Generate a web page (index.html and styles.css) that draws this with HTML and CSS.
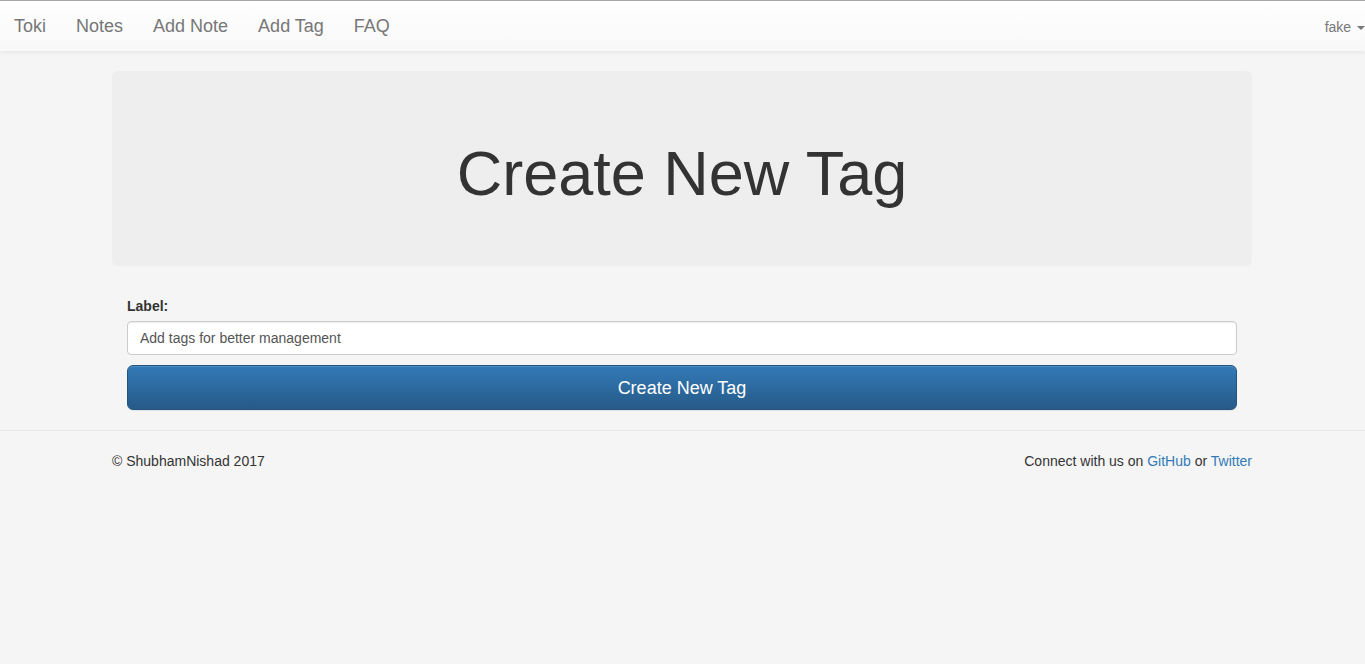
FILE: index.html
```html
<!DOCTYPE html>
<html lang="en">
<head>
<meta charset="utf-8">
<title>Toki - Add Tag</title>
<link rel="stylesheet" href="styles.css">
</head>
<body>
<nav class="navbar">
  <ul class="nav-left">
    <li><a class="brand" href="#">Toki</a></li>
    <li><a href="#">Notes</a></li>
    <li><a href="#">Add Note</a></li>
    <li><a href="#">Add Tag</a></li>
    <li><a href="#">FAQ</a></li>
  </ul>
  <div class="nav-right">
    <a href="#" class="user">fake <span class="caret"></span></a>
  </div>
</nav>
<main class="container">
  <div class="jumbotron">
    <h1>Create New Tag</h1>
  </div>
  <form class="tag-form">
    <label for="label">Label:</label>
    <input id="label" type="text" value="Add tags for better management">
    <button type="button" class="btn-primary">Create New Tag</button>
  </form>
</main>
<footer class="footer">
  <div class="footer-inner">
    <p>© ShubhamNishad 2017</p>
    <p>Connect with us on <a href="#">GitHub</a> or <a href="#">Twitter</a></p>
  </div>
</footer>
</body>
</html>
```
FILE: styles.css
```css
* { box-sizing: border-box; }
html, body { margin: 0; padding: 0; }
body {
  font-family: "Liberation Sans", Arial, Helvetica, sans-serif;
  font-size: 14px;
  line-height: 20px;
  color: #333;
  background: #f5f5f5;
  min-height: 664px;
}
a { text-decoration: none; }

.navbar {
  height: 51px;
  border-top: 1px solid #a9a9a9;
  background: linear-gradient(to bottom, #ffffff 0%, #f8f8f8 100%);
  box-shadow: 0 1px 5px rgba(0,0,0,0.08);
  display: flex;
  justify-content: space-between;
  align-items: stretch;
}
.nav-left {
  list-style: none;
  margin: 0;
  padding: 0;
  display: flex;
}
.nav-left a {
  display: block;
  padding: 15px 15px;
  font-size: 18px;
  line-height: 20px;
  color: #777;
}
.nav-left a.brand { padding-left: 14px; padding-right: 15px; }
.nav-right {
  display: flex;
  align-items: center;
  padding-right: 0;
}
.user {
  color: #777;
  font-size: 14px;
  line-height: 20px;
  padding-top: 1px;
}
.caret {
  display: inline-block;
  width: 0;
  height: 0;
  margin-left: 2px;
  vertical-align: middle;
  border-top: 4px solid #777;
  border-left: 4px solid transparent;
  border-right: 4px solid transparent;
}

.container {
  width: 1170px;
  margin-left: calc((100% - 1171px) / 2);
  padding: 20px 15px 0;
}
.jumbotron {
  background: #eeeeee;
  border-radius: 6px;
  padding: 48px 60px;
  text-align: center;
  margin-bottom: 30px;
}
.jumbotron h1 {
  margin: 20px 0 10px;
  font-size: 63px;
  line-height: 69px;
  font-weight: 500;
  color: #333;
}

.tag-form {
  padding: 0 15px;
  display: flex;
  flex-direction: column;
}
.tag-form label {
  font-weight: bold;
  margin-bottom: 5px;
  line-height: 20px;
}
.tag-form input {
  height: 34px;
  padding: 6px 12px;
  font-family: inherit;
  font-size: 14px;
  color: #555;
  background: #fff;
  border: 1px solid #ccc;
  border-radius: 4px;
  box-shadow: inset 0 1px 1px rgba(0,0,0,0.075);
  margin-bottom: 10px;
}
.btn-primary {
  height: 45px;
  padding: 0 16px;
  font-family: inherit;
  font-size: 18px;
  line-height: 24px;
  color: #fff;
  border: 1px solid #245580;
  border-radius: 6px;
  background: linear-gradient(to bottom, #337ab7 0%, #265a88 100%);
  box-shadow: inset 0 1px 0 rgba(255,255,255,0.15), 0 1px 1px rgba(0,0,0,0.075);
  cursor: pointer;
}

.footer {
  margin-top: 20px;
  border-top: 1px solid #e9e9e9;
}
.footer-inner {
  width: 1170px;
  margin-left: calc((100% - 1171px) / 2);
  padding: 20px 15px;
  display: flex;
  justify-content: space-between;
}
.footer-inner p { margin: 0; line-height: 20px; }
.footer-inner a { color: #337ab7; }
```
